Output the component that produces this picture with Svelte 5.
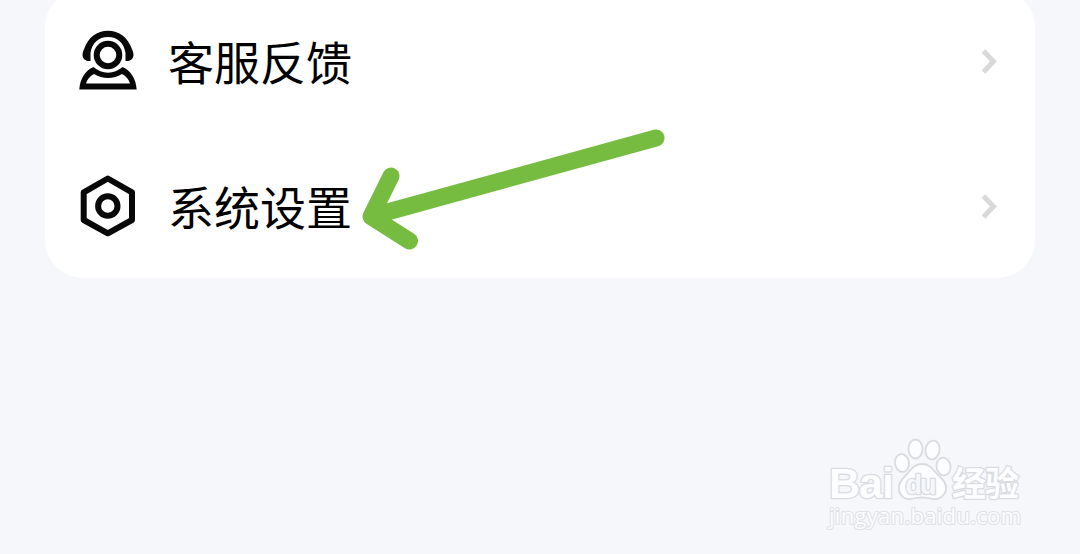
<script>
    const items = [
        { icon: 'service', label: '客服反馈' },
        { icon: 'settings', label: '系统设置' }
    ];
</script>

<div class="page">
    <ul class="card">
        {#each items as item}
            <li>
                {#if item.icon === 'service'}
                    <svg class="icon" viewBox="78 29 60 64">
                        <path d="M90.500 61C86 61.500 82.5 59 82.5 55Q82.5 52 84.3 48.5C88 37.500 97 30.7 108 30.7S128 37.500 131.7 48.5Q133.5 52 133.5 55C133.5 59 130 61.500 125.500 61V53C124 43 117.5 37 108 37S92 43 90.500 53Z"/>
                        <circle class="line" cx="108" cy="55" r="11.3"/>
                        <path fill-rule="evenodd" d="M79.3 89.5C80 79 85 70.5 93.5 67Q100 72.7 108 72.7T122.5 67C131 70.5 136 79 136.7 89.5ZM86 83.5H130C128.8 79.5 126 76 122 74Q115.5 78 108 78T94 74C90 76 87.2 79.5 86 83.5Z"/>
                    </svg>
                {:else}
                    <svg class="icon" viewBox="78 174 60 64">
                        <path class="line" d="M107.8 178.5L132 192.3V220L107.8 233.3L83.7 220V192.3Z"/>
                        <circle class="line" cx="107.8" cy="206" r="9.7"/>
                    </svg>
                {/if}
                <span>{item.label}</span>
                <svg class="chevron" viewBox="0 0 20 30">
                    <path d="M4.500 5L14.500 15.500L4.500 26"/>
                </svg>
            </li>
        {/each}
    </ul>

    <svg class="arrow" viewBox="350 120 330 140">
        <path d="M656 138L371 216.5M391 176L371 216.5L409.5 241"/>
    </svg>

    <svg class="watermark" viewBox="815 430 220 110">
        <text class="brand" x="829" y="498" textLength="65">Bai</text>
        <g class="paw">
            <ellipse cx="902" cy="463" rx="7" ry="9" transform="rotate(-8 902 463)"/>
            <ellipse cx="915.5" cy="449" rx="7" ry="9.5"/>
            <ellipse cx="932.5" cy="450" rx="7" ry="9.5" transform="rotate(10 932.5 450)"/>
            <ellipse cx="943.5" cy="466.5" rx="7" ry="9" transform="rotate(-8 943.5 466.5)"/>
            <path d="M922 464C914 464 911 470 906 475C900 481 898 485 899 490C900 496 905 500 911 499Q922 496 933 499C940 500 945 495 946 490C947 484 944 480 938 475C933 470 930 464 922 464Z"/>
        </g>
        <text class="du" x="905.5" y="494" textLength="31">du</text>
        <text class="cn" x="952" y="496" textLength="67">经验</text>
        <text class="url" x="829" y="524" textLength="192">jingyan.baidu.com</text>
    </svg>
</div>

<style>
    :global(body) {
        background-color: #f5f7fb;
    }
    .page {
        position: relative;
        height: 554px;
        overflow: hidden;
        background-color: #f5f7fb;
    }
    .card {
        margin: -11px 45px 0;
        padding: 0;
        list-style: none;
        background-color: #fff;
        border-radius: 38px;
    }
    li {
        display: flex;
        align-items: center;
        height: 144.5px;
        padding: 0 36px 0 33px;
    }
    span {
        flex: 1;
        margin-left: 30px;
        padding-bottom: 2px;
        font-family: "Noto Sans CJK SC", sans-serif;
        font-size: 46px;
        line-height: 60px;
        color: #000;
    }
    .icon {
        width: 60px;
        height: 64px;
        fill: #080808;
    }
    .line {
        fill: none;
        stroke: #080808;
        stroke-width: 6;
        stroke-linejoin: round;
    }
    .chevron {
        width: 20px;
        height: 30px;
        fill: none;
        stroke: #d9d9d9;
        stroke-width: 5;
    }
    .arrow {
        position: absolute;
        left: 350px;
        top: 120px;
        width: 330px;
        height: 140px;
        fill: none;
        stroke: #76bc40;
        stroke-width: 17;
        stroke-linecap: round;
        stroke-linejoin: round;
    }
    .watermark {
        position: absolute;
        left: 815px;
        top: 430px;
        width: 220px;
        height: 110px;
        fill: #fcfdff;
        stroke: #d9dbdf;
        stroke-width: 2.6;
        stroke-linejoin: round;
        paint-order: stroke;
    }
    .paw {
        stroke-width: 1.8;
        paint-order: normal;
    }
    .brand {
        font: bold 43px "Liberation Sans", sans-serif;
    }
    .du {
        fill: #f5f7fb;
        font: bold 27px "Liberation Sans", sans-serif;
    }
    .cn {
        font: bold 34px "Noto Sans CJK SC", sans-serif;
    }
    .url {
        font: 22px "Open Sans", sans-serif;
        stroke: #dfe1e5;
        stroke-width: 2.2;
    }
</style>
